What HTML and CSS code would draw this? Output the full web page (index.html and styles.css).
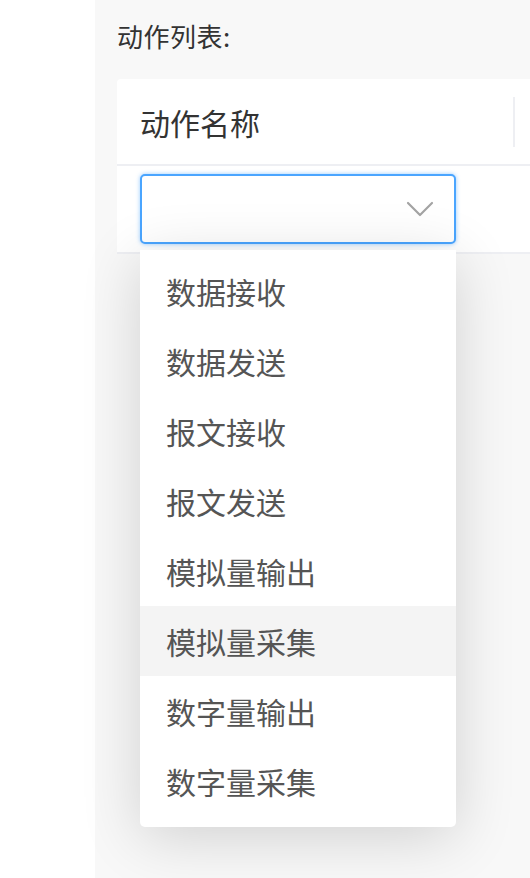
FILE: index.html
```html
<!DOCTYPE html>
<html lang="zh-CN">
<head>
<meta charset="utf-8">
<title>动作列表</title>
<link rel="stylesheet" href="styles.css">
</head>
<body>
<div class="page">
  <div class="gutter"></div>
  <div class="panel">
    <div class="panel-label">动作列表:</div>
    <div class="table-card">
      <div class="table-head">
        <div class="th th-name">动作名称</div>
        <div class="th th-next"></div>
      </div>
      <div class="table-row">
        <div class="td td-name">
          <div class="select">
            <div class="select-input">
              <svg class="select-arrow" width="28" height="16" viewBox="0 0 28 16">
                <polyline points="2,2 14,14 26,2" fill="none" stroke="#a4a4a4" stroke-width="2.2" stroke-linecap="round" stroke-linejoin="round"/>
              </svg>
            </div>
            <ul class="dropdown">
              <li class="option">数据接收</li>
              <li class="option">数据发送</li>
              <li class="option">报文接收</li>
              <li class="option">报文发送</li>
              <li class="option">模拟量输出</li>
              <li class="option is-hover">模拟量采集</li>
              <li class="option">数字量输出</li>
              <li class="option">数字量采集</li>
            </ul>
          </div>
        </div>
      </div>
    </div>
  </div>
</div>
</body>
</html>
```
FILE: styles.css
```css
html, body {
  margin: 0;
  padding: 0;
  background: #ffffff;
  overflow: hidden;
}
body {
  font-family: "Noto Sans CJK SC", "Noto Sans", sans-serif;
  width: 530px;
  height: 878px;
}
.page {
  display: flex;
  width: 530px;
  height: 878px;
}
.gutter {
  width: 95px;
  flex: none;
  background: #ffffff;
}
.panel {
  flex: 1;
  min-width: 0;
  background: #f8f8f8;
  padding: 17px 0 0 22px;
}
.panel-label {
  font-size: 26px;
  line-height: 38px;
  height: 38px;
  color: #333333;
  margin-bottom: 24px;
  letter-spacing: 0.5px;
}
.table-card {
  background: #ffffff;
  border-radius: 4px 0 0 0;
}
.table-head {
  display: flex;
  align-items: center;
  height: 85px;
  border-bottom: 2px solid #eeeff3;
}
.th {
  font-size: 30px;
  color: #333333;
  line-height: 40px;
}
.th-name {
  width: 396px;
  flex: none;
  padding-left: 23px;
  box-sizing: border-box;
}
.th-next {
  width: 2px;
  height: 50px;
  background: #eeeff3;
}
.table-row {
  height: 86px;
  border-bottom: 2px solid #eeeff3;
  display: flex;
  align-items: center;
}
.td-name {
  padding-left: 23px;
}
.select {
  position: relative;
  width: 316px;
}
.select-input {
  height: 70px;
  box-sizing: border-box;
  border: 2px solid #4aa5ff;
  border-radius: 5px;
  background: #ffffff;
  box-shadow: 0 0 4px rgba(64, 158, 255, 0.55);
  display: flex;
  align-items: center;
  justify-content: flex-end;
  padding-right: 20px;
}
.select-arrow {
  display: block;
}
.dropdown {
  position: absolute;
  top: 76px;
  left: 0;
  width: 316px;
  margin: 0;
  padding: 6px 0 11px 0;
  list-style: none;
  background: #ffffff;
  border-radius: 0 0 5px 5px;
  box-shadow: 0 10px 60px rgba(0, 0, 0, 0.16);
  z-index: 10;
}
.option {
  height: 70px;
  line-height: 70px;
  padding-left: 26px;
  font-size: 30px;
  color: #555555;
}
.option.is-hover {
  background: #f4f4f4;
}
```
